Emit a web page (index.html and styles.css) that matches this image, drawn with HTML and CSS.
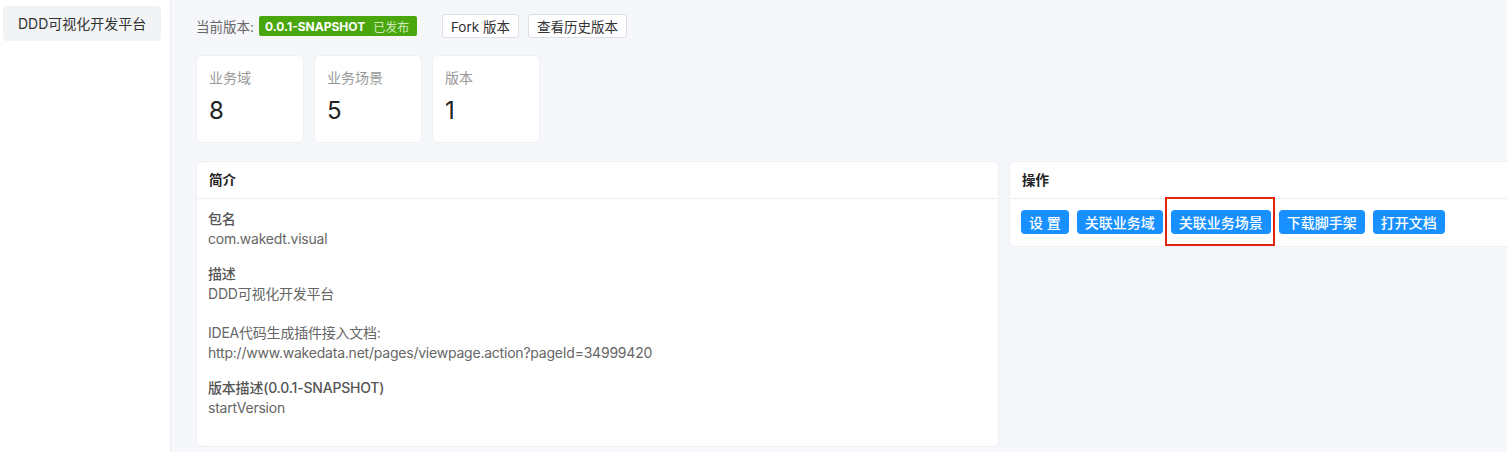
FILE: index.html
```html
<!DOCTYPE html>
<html lang="zh-CN">
<head>
<meta charset="utf-8">
<title>DDD可视化开发平台</title>
<link rel="stylesheet" href="styles.css">
</head>
<body>
<div class="app">
  <aside class="sidebar">
    <div class="menu-item">DDD可视化开发平台</div>
  </aside>
  <main class="main">
    <div class="version-bar">
      <span class="version-label">当前版本:</span>
      <span class="tag"><b>0.0.1-SNAPSHOT</b><span class="tag-status">已发布</span></span>
      <button class="btn-plain first">Fork 版本</button>
      <button class="btn-plain">查看历史版本</button>
    </div>
    <div class="stats">
      <div class="stat"><div class="stat-label">业务域</div><div class="stat-value">8</div></div>
      <div class="stat"><div class="stat-label">业务场景</div><div class="stat-value">5</div></div>
      <div class="stat"><div class="stat-label">版本</div><div class="stat-value">1</div></div>
    </div>
    <div class="panels">
      <section class="card intro">
        <header class="card-head">简介</header>
        <div class="card-body intro-body">
          <div class="field">
            <div class="field-title">包名</div>
            <div class="field-text">com.wakedt.visual</div>
          </div>
          <div class="field">
            <div class="field-title">描述</div>
            <div class="field-text">DDD可视化开发平台<br><br>IDEA代码生成插件接入文档:<br>http://www.wakedata.net/pages/viewpage.action?pageId=34999420</div>
          </div>
          <div class="field">
            <div class="field-title">版本描述(0.0.1-SNAPSHOT)</div>
            <div class="field-text">startVersion</div>
          </div>
        </div>
      </section>
      <section class="card ops">
        <header class="card-head">操作</header>
        <div class="card-body ops-body">
          <button class="btn-primary">设 置</button>
          <button class="btn-primary">关联业务域</button>
          <span class="highlight-wrap"><button class="btn-primary">关联业务场景</button><span class="highlight"></span></span>
          <button class="btn-primary">下载脚手架</button>
          <button class="btn-primary">打开文档</button>
        </div>
      </section>
    </div>
  </main>
</div>
</body>
</html>
```

FILE: styles.css
```css
* { box-sizing: border-box; }
html, body {
  margin: 0;
  padding: 0;
  width: 1507px;
  height: 452px;
  overflow: hidden;
  background: #f6f7fb;
  font-family: Inter, "Noto Sans CJK SC", sans-serif;
  color: #333;
}
.app {
  display: flex;
  height: 452px;
}
.sidebar {
  width: 171px;
  flex: 0 0 171px;
  background: #fff;
  border-right: 1px solid #ececf0;
  padding: 6px 9px 0 3px;
}
.menu-item {
  height: 35px;
  line-height: 35px;
  background: #f2f3f5;
  border-radius: 4px;
  padding-left: 15px;
  font-size: 14px;
  color: #333;
}
.main {
  flex: 1;
  min-width: 0;
  padding: 14px 0 0 25px;
  overflow: hidden;
}
.version-bar {
  display: flex;
  align-items: center;
  height: 24px;
  white-space: nowrap;
}
.version-label {
  font-size: 13.5px;
  color: #666;
  margin-right: 5px;
}
.tag {
  display: inline-flex;
  align-items: center;
  flex: 0 0 158px;
  height: 20px;
  width: 158px;
  background: #49a70d;
  border-radius: 2px;
  padding: 0 6px;
  color: #fff;
  font-size: 12px;
  white-space: nowrap;
}
.tag b { font-weight: 700; }
.tag-status {
  margin-left: 8px;
  color: #cfe9bd;
}
.btn-plain {
  height: 24px;
  padding: 0 8px;
  background: #fff;
  border: 1px solid #dcdfe6;
  border-radius: 3px;
  font-family: inherit;
  font-size: 13.5px;
  color: #333;
  margin-left: 9px;
  white-space: nowrap;
}
.btn-plain.first { margin-left: 25px; }
.stats {
  display: flex;
  gap: 10px;
  margin-top: 17px;
}
.stat {
  width: 108px;
  height: 88px;
  background: #fff;
  border-radius: 6px;
  border: 1px solid #f0f1f4;
  padding: 12px 12px 0;
}
.stat-label {
  font-size: 14px;
  color: #999;
  line-height: 20px;
}
.stat-value {
  font-size: 24px;
  color: #222;
  line-height: 28px;
  margin-top: 9px;
}
.panels {
  display: flex;
  gap: 10px;
  margin-top: 18px;
  align-items: flex-start;
}
.card {
  background: #fff;
  border: 1px solid #eeeff3;
  border-radius: 6px;
}
.intro { width: 803px; flex: 0 0 803px; height: 286px; }
.ops { width: 540px; flex: 0 0 540px; height: 86px; }
.card-head {
  height: 37px;
  line-height: 36px;
  padding: 0 12px;
  border-bottom: 1px solid #eeeff3;
  font-size: 13.5px;
  font-weight: 600;
  color: #222;
}
.intro-body {
  padding: 10px 11px;
}
.field + .field { margin-top: 15px; }
.field-title {
  font-size: 14px;
  letter-spacing: -0.2px;
  color: #555;
  font-weight: 500;
  line-height: 20px;
}
.field-text {
  font-size: 14px;
  letter-spacing: -0.22px;
  color: #666;
  line-height: 19.7px;
}
.ops-body {
  display: flex;
  gap: 8px;
  padding: 11px 11px;
}
.btn-primary {
  height: 24px;
  padding: 0 8px;
  background: #1890ff;
  border: none;
  border-radius: 4px;
  color: #fff;
  font-family: inherit;
  font-size: 14px;
  font-weight: 500;
  white-space: nowrap;
}
.highlight-wrap {
  position: relative;
  display: inline-flex;
}
.highlight {
  position: absolute;
  left: -6px;
  right: -4px;
  top: -13px;
  bottom: -12px;
  border: 2px solid #e2240f;
  pointer-events: none;
}
```
